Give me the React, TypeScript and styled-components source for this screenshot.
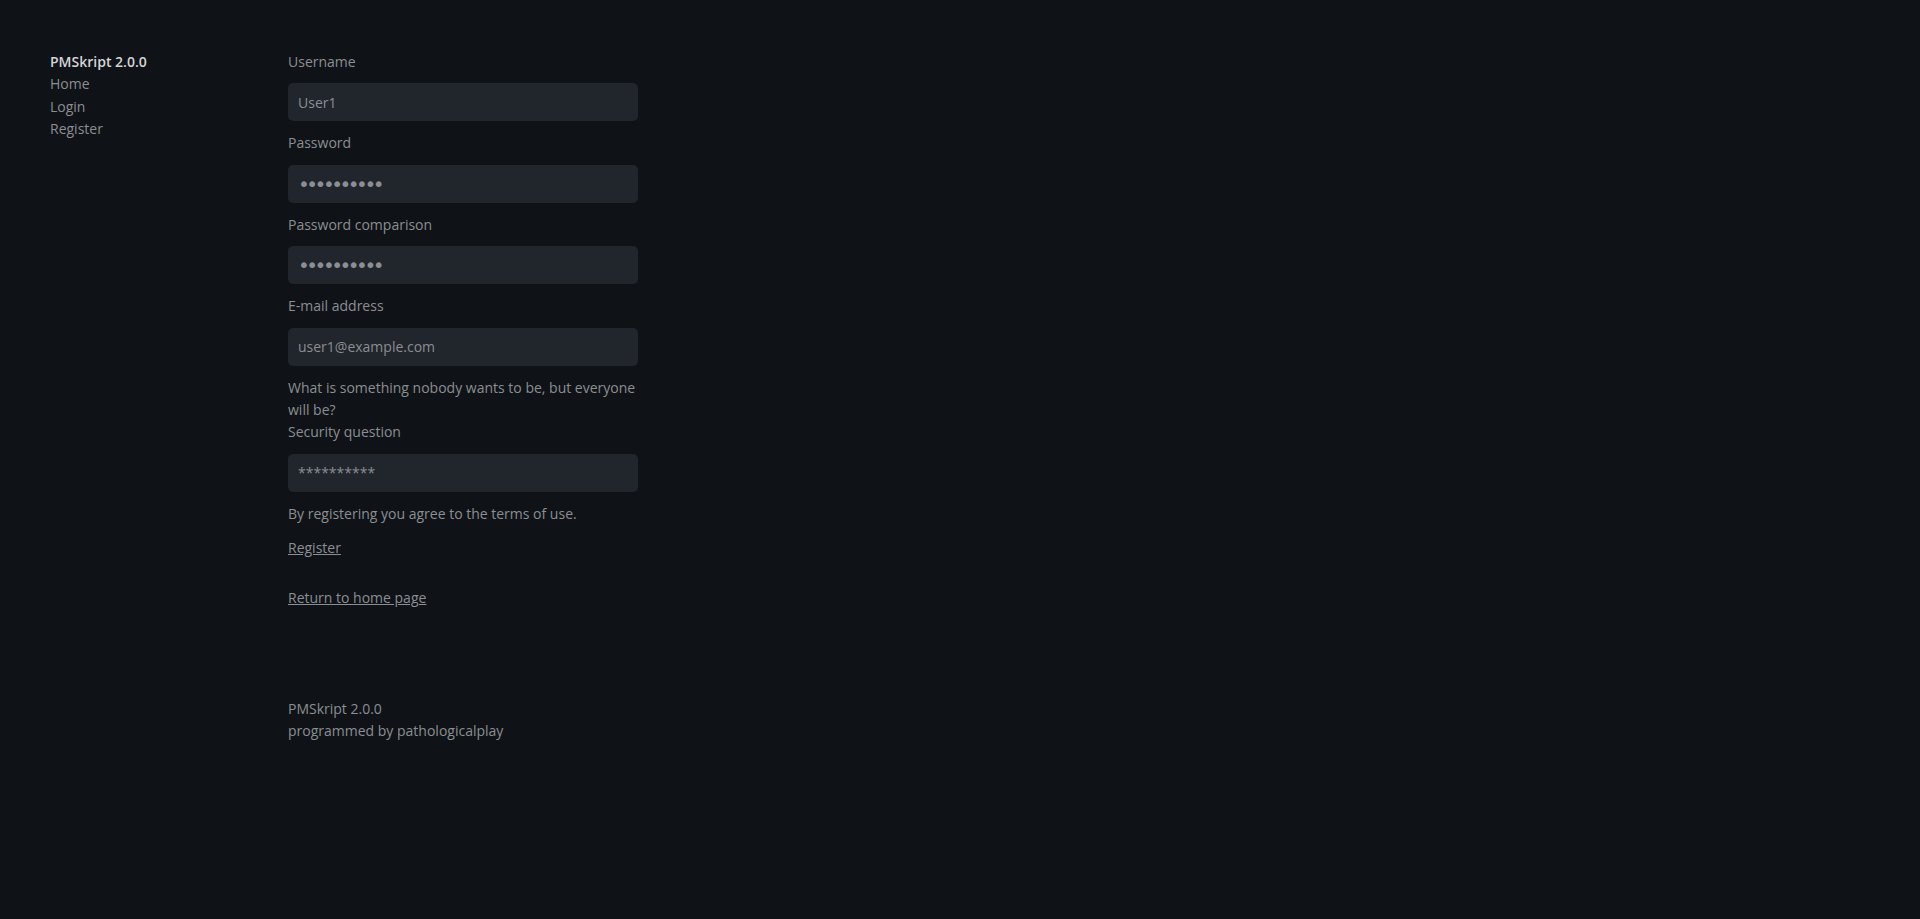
import React from "react";
import styled, { createGlobalStyle } from "styled-components";

const GlobalStyle = createGlobalStyle`
  html, body {
    margin: 0;
    padding: 0;
    background: #0f1317;
  }
  body {
    font-family: "Open Sans", "Noto Sans", sans-serif;
    font-size: 14px;
    line-height: 1.6;
    color: #8b8e92;
    min-height: 919px;
  }
`;

const Page = styled.div`
  display: grid;
  grid-template-columns: 238px 350px;
  padding: 51px 0 0 50px;
  min-height: 919px;
  box-sizing: border-box;
`;

const Sidebar = styled.nav`
  display: flex;
  flex-direction: column;
`;

const Brand = styled.span`
  color: #d4d5d7;
  font-weight: 600;
`;

const NavLink = styled.a`
  color: #8b8e92;
  text-decoration: none;
`;

const Main = styled.main`
  display: flex;
  flex-direction: column;
`;

const Form = styled.form`
  display: flex;
  flex-direction: column;
`;

const Label = styled.label`
  display: block;
  margin-bottom: 10px;
`;

const Input = styled.input<{ $masked?: boolean }>`
  box-sizing: border-box;
  width: 350px;
  height: 38px;
  margin: 0 0 11px;
  padding: 0 10px;
  border: none;
  border-radius: 5px;
  background: #21252c;
  color: #8b8e92;
  font-family: ${(p) =>
    p.$masked ? `"DejaVu Sans", sans-serif` : `"Open Sans", "Noto Sans", sans-serif`};
  font-size: ${(p) => (p.$masked ? 20 : 14)}px;
  letter-spacing: ${(p) => (p.$masked ? "-3.5px" : "normal")};
  outline: none;
`;

const Text = styled.p<{ $mb?: number }>`
  margin: 0 0 ${(p) => p.$mb ?? 0}px;
`;

const LinkText = styled.a<{ $mb?: number }>`
  display: block;
  width: fit-content;
  color: #8b8e92;
  text-decoration: underline;
  margin-bottom: ${(p) => p.$mb ?? 0}px;
`;

const Footer = styled.footer`
  display: flex;
  flex-direction: column;
`;

export default function App() {
  return (
    <>
      <GlobalStyle />
      <Page>
        <Sidebar>
          <Brand>PMSkript 2.0.0</Brand>
          <NavLink href="#">Home</NavLink>
          <NavLink href="#">Login</NavLink>
          <NavLink href="#">Register</NavLink>
        </Sidebar>
        <Main>
          <Form onSubmit={(e) => e.preventDefault()}>
            <Label htmlFor="username">Username</Label>
            <Input id="username" type="text" defaultValue="User1" readOnly />
            <Label htmlFor="password">Password</Label>
            <Input id="password" type="password" $masked defaultValue="password12" readOnly />
            <Label htmlFor="password2">Password comparison</Label>
            <Input id="password2" type="password" $masked defaultValue="password12" readOnly />
            <Label htmlFor="email">E-mail address</Label>
            <Input id="email" type="text" defaultValue="user1@example.com" readOnly />
            <Label htmlFor="security">
              What is something nobody wants to be, but everyone will be?
              <br />
              Security question
            </Label>
            <Input id="security" type="text" defaultValue="**********" readOnly />
            <Text $mb={12}>By registering you agree to the terms of use.</Text>
            <LinkText href="#" $mb={27}>Register</LinkText>
          </Form>
          <LinkText href="#" $mb={89}>Return to home page</LinkText>
          <Footer>
            <span>PMSkript 2.0.0</span>
            <span>programmed by pathologicalplay</span>
          </Footer>
        </Main>
      </Page>
    </>
  );
}
